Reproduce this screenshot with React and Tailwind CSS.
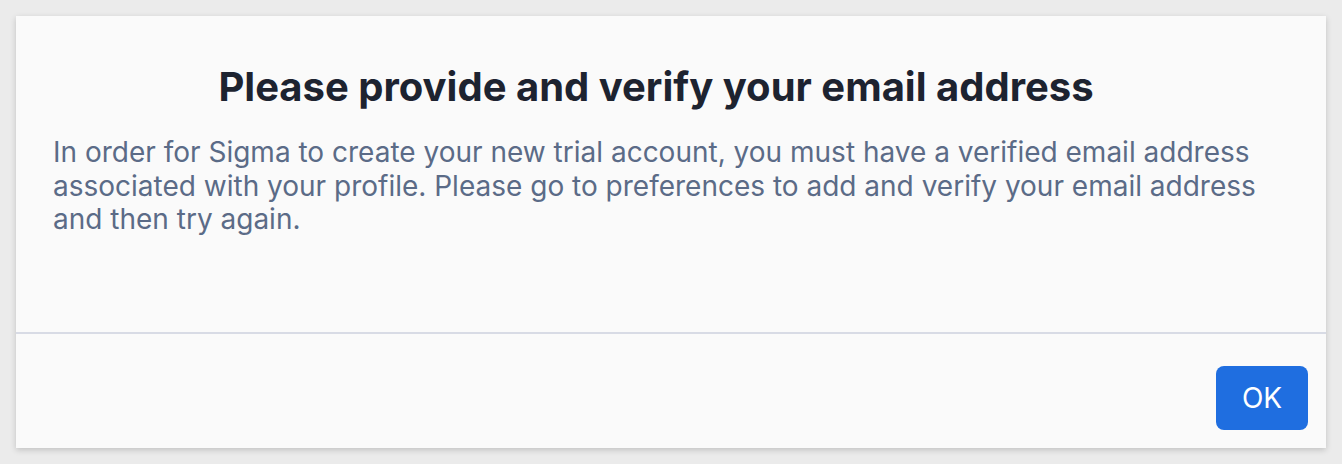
export default function App() {
  return (
    <div className="min-h-screen bg-[#ebebeb] p-4" style={{ fontFamily: 'Inter, "Noto Sans", sans-serif' }}>
      <div className="flex h-[432px] flex-col bg-[#fafafa] shadow-[0_2px_6px_rgba(0,0,0,0.18)]">
        <div className="flex-1 px-[37px] pt-[47px]">
          <h1 className="pr-[30px] text-center text-[40px] font-bold leading-[48px] text-[#1d2330]">
            Please provide and verify your email address
          </h1>
          <p className="mt-[25px] text-[28px] leading-[33.5px] text-[#5b6b87]">
            In order for Sigma to create your new trial account, you must have a verified email address
            associated with your profile. Please go to preferences to add and verify your email address
            and then try again.
          </p>
        </div>
        <div className="h-[2px] bg-[#d8dbe5]" />
        <div className="flex h-[114px] items-start justify-end px-[18px] pt-[32px]">
          <button className="h-16 w-[92px] rounded-lg bg-[#1f6ee0] text-[28px] text-white">OK</button>
        </div>
      </div>
    </div>
  );
}
